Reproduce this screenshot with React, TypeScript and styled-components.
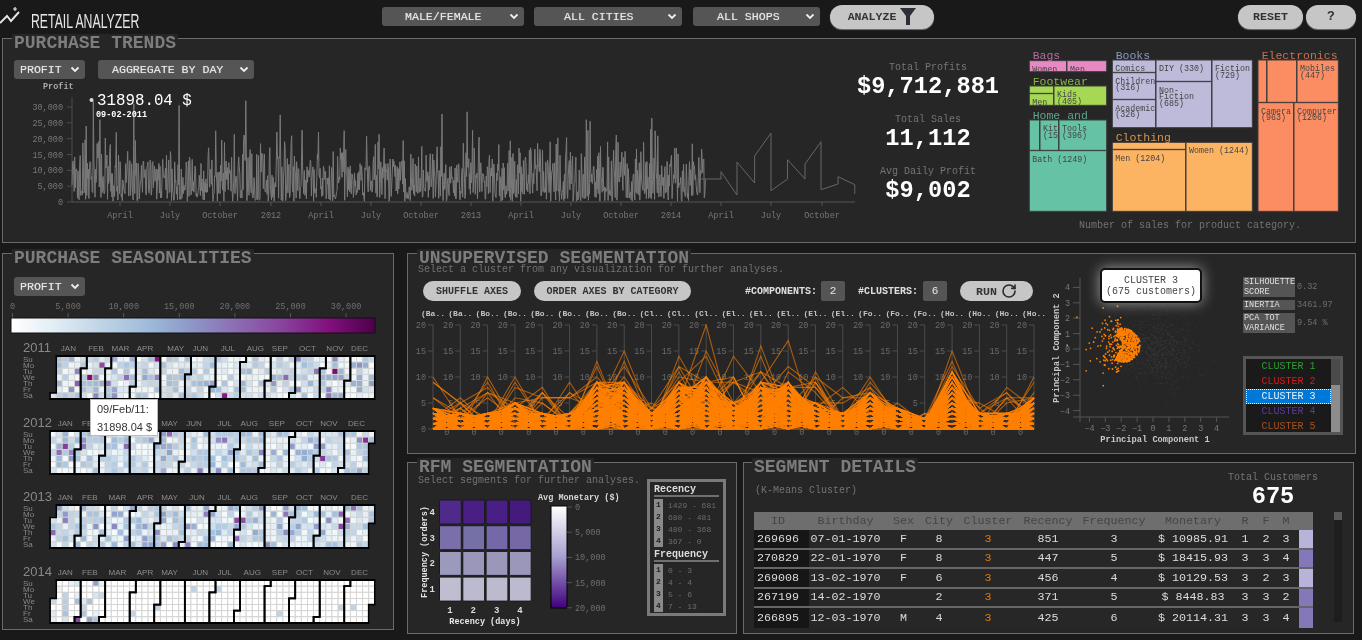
import React, { FC, ReactNode } from "react";
import styled, { createGlobalStyle } from "styled-components";
import { RotateCw } from "lucide-react";

const MONO = `"Liberation Mono", "Courier New", monospace`;
const SANS = `"Liberation Sans", Arial, sans-serif`;

const GlobalStyle = createGlobalStyle`
  html, body { margin: 0; padding: 0; background: #191919; }
  * { box-sizing: border-box; }
`;

// small seeded generator so the charts stay the same between runs
const makeRandom = (seed: number) => () => {
  seed = (seed * 1664525 + 1013904223) % 4294967296;
  return seed / 4294967296;
};
const gaussOf = (rnd: () => number) => () =>
  Math.sqrt(-2 * Math.log(rnd() + 1e-9)) * Math.cos(2 * Math.PI * rnd());

const DAY_PX = 0.5465;
const DAILY_COUNT = 1160;
const daily: number[] = (() => {
  const rnd = makeRandom(71);
  const gauss = gaussOf(rnd);
  const out: number[] = [];
  for (let i = 0; i < DAILY_COUNT; i++) {
    let v = rnd() < 0.26 ? 300 + rnd() * 3600 : 8800 + 4600 * gauss();
    if (rnd() < 0.035) v = 15000 + rnd() * 8000;
    out.push(Math.max(300, Math.min(v, 23000)));
  }
  const spikes: [number, number][] = [
    [86, 24000], [100, 26000], [116, 22000], [134, 31000], [179, 30500], [246, 32000],
    [280, 27500], [442, 27800], [467, 28500], [586, 26000], [590, 25500], [652, 26500],
  ];
  spikes.forEach(([x, v]) => {
    out[Math.round((x - 72) / DAY_PX)] = v;
  });
  out[39] = 31898;
  return out;
})();

const Page = styled.div`
  width: 1362px;
  height: 640px;
  overflow: hidden;
  background: #191919;
  font-family: ${MONO};
  padding: 0 6px 0 2px;
  filter: blur(0.35px);
`;

const Header = styled.header`
  height: 38px;
  margin-left: -2px;
  display: flex;
  align-items: center;
  padding-bottom: 5px;
`;

const Brand = styled.div`
  width: 382px;
  display: flex;
  align-items: center;
  padding-top: 9px;
`;

const BrandName = styled.span`
  font-family: ${SANS};
  font-size: 19.5px;
  color: #e6e6e6;
  white-space: nowrap;
  margin-left: 9px;
  display: inline-block;
  transform: scaleX(0.63);
  transform-origin: left center;
`;

const SelectBox = styled.div<{ $width: number; $pad: number; $gap?: number }>`
  width: ${(p) => p.$width}px;
  height: 19px;
  margin-right: ${(p) => p.$gap ?? 0}px;
  flex: none;
  background: #555;
  border-radius: 3px;
  color: #e6e6e6;
  font-size: 11.6px;
  text-shadow: 0 0 1px rgba(255, 255, 255, 0.55);
  display: flex;
  align-items: center;
  justify-content: space-between;
  padding: 0 5px 0 ${(p) => p.$pad}px;
`;

const Pill = styled.button<{ $width: number; $gap?: number; $size?: number }>`
  width: ${(p) => p.$width}px;
  height: 24px;
  margin-right: ${(p) => p.$gap ?? 0}px;
  flex: none;
  border: none;
  border-radius: 12px;
  background: #c6c6c6;
  box-shadow: 0 1px 1px #777;
  color: #333;
  font-family: ${MONO};
  font-size: ${(p) => p.$size ?? 11.6}px;
  font-weight: bold;
  display: flex;
  align-items: center;
  justify-content: center;
  gap: 4px;
  padding: 0;
`;

const HeaderEnd = styled.div`
  margin-left: auto;
  display: flex;
  gap: 3px;
`;

const Panel = styled.section<{ $height: number; $width?: number }>`
  position: relative;
  height: ${(p) => p.$height}px;
  width: ${(p) => (p.$width ? `${p.$width}px` : "auto")};
  background: #262626;
  border: 1px solid #6a6a6a;
  flex: none;
`;

const Title = styled.h2<{ $left?: number }>`
  width: fit-content;
  height: 18px;
  margin: -5px 0 0 ${(p) => p.$left ?? 9}px;
  padding: 0 2px;
  background: #262626;
  color: #7d7d7d;
  font-size: 18px;
  line-height: 18px;
  font-weight: bold;
  white-space: nowrap;
`;

const Sub = styled.div<{ $left?: number; $top?: number }>`
  margin: ${(p) => p.$top ?? 0}px 0 0 ${(p) => p.$left ?? 10}px;
  color: #737373;
  font-size: 10px;
  line-height: 10px;
  white-space: nowrap;
`;

const ChartSvg = styled.svg`
  display: block;
  overflow: visible;
`;

const AxisText = styled.text<{ $size?: number; $color?: string; $bold?: boolean; $sans?: boolean }>`
  font-family: ${(p) => (p.$sans ? SANS : MONO)};
  font-size: ${(p) => p.$size ?? 8.5}px;
  fill: ${(p) => p.$color ?? "#777"};
  font-weight: ${(p) => (p.$bold ? "bold" : "normal")};
`;

/* ---------- trends ---------- */

const TrendsBody = styled.div`
  display: flex;
`;

const TrendsLeft = styled.div`
  width: 857px;
  padding: 8px 0 0 11px;
`;

const SelectRow = styled.div`
  display: flex;
  margin-bottom: 4px;
`;

const KpiColumn = styled.div`
  width: 136px;
  padding-top: 10px;
  display: flex;
  flex-direction: column;
  gap: 14px;
  align-items: center;
`;

const Kpi = styled.div`
  display: flex;
  flex-direction: column;
  align-items: center;
  white-space: nowrap;
`;

const KpiLabel = styled.div`
  color: #757575;
  font-size: 10px;
  line-height: 12px;
`;

const KpiValue = styled.div`
  color: #fff;
  font-size: 23.7px;
  line-height: 26px;
  font-weight: bold;
`;

const TreemapColumn = styled.div`
  width: 335px;
  margin-left: 24px;
`;

const TreemapCaption = styled.div`
  color: #737373;
  font-size: 10px;
  line-height: 12px;
  text-align: center;
  padding-left: 5px;
  margin-top: 6px;
`;

const tickDates: [string, number][] = [
  ["April", 120], ["July", 170], ["October", 220], ["2012", 271], ["April", 321], ["July", 371],
  ["October", 421], ["2013", 471], ["April", 521], ["July", 571], ["October", 621], ["2014", 671],
  ["April", 721], ["July", 771], ["October", 822],
];

const sparseLine =
  "701,180 721,180 721,172.7 737,196 737,163 754.6,184 754.6,157 771,134 771,191.7 787.5,180 787.5,160.7 805,180 805,165 821,142.7 821,190.7 838,185 838,177.7 854.8,185.7 854.8,195";

const TrendChart: FC = () => {
  const y = (v: number) => 203 - (v / 30000) * 95;
  const line = daily.map((v, i) => `${(72 + i * DAY_PX).toFixed(1)},${y(v).toFixed(1)}`).join(" ");
  return (
    <ChartSvg width={846} height={140} viewBox="14 84 846 140">
      <AxisText x={43} y={90} $bold $color="#aaa">Profit</AxisText>
      <line x1={72} y1={98} x2={72} y2={203} stroke="#4d4d4d" />
      {[0, 5000, 10000, 15000, 20000, 25000, 30000].map((v) => (
        <g key={v}>
          <line x1={67} x2={72} y1={y(v)} y2={y(v)} stroke="#4d4d4d" />
          <AxisText x={63} y={y(v) + 3} textAnchor="end">{v.toLocaleString("en-US")}</AxisText>
        </g>
      ))}
      <line x1={72} y1={203} x2={855} y2={203} stroke="#555" />
      {tickDates.map(([t, x], i) => (
        <g key={i}>
          <line x1={x} x2={x} y1={203} y2={207} stroke="#555" />
          <AxisText x={x} y={219} textAnchor="middle">{t}</AxisText>
        </g>
      ))}
      <polyline points={line} fill="none" stroke="#7a7a7a" strokeWidth={1} />
      <polyline points={sparseLine} fill="none" stroke="#666" strokeWidth={1} />
      <circle cx={91.5} cy={101} r={2} fill="#ddd" />
      <AxisText x={97} y={106} $size={15.8} $color="#fff">31898.04 $</AxisText>
      <AxisText x={96} y={118} $size={8.5} $color="#fff" $bold>09-02-2011</AxisText>
    </ChartSvg>
  );
};

interface Cell {
  r: [number, number, number, number];
  lines?: string[];
}
interface Group {
  name: string;
  color: string;
  label: string;
  at: [number, number];
  cells: Cell[];
}

const treemap: Group[] = [
  { name: "Bags", color: "#e78ac3", label: "#b56e9e", at: [38, 58], cells: [
    { r: [28, 62, 140, 95], lines: ["Women"] },
    { r: [141, 62, 260, 95], lines: ["Men"] },
  ] },
  { name: "Footwear", color: "#a6d854", label: "#8cb24a", at: [38, 136], cells: [
    { r: [28, 138, 101, 160] },
    { r: [28, 161, 101, 196], lines: ["Men"] },
    { r: [102, 138, 260, 196], lines: ["Kids", "(405)"] },
  ] },
  { name: "Home and", color: "#66c2a5", label: "#5fa48f", at: [38, 238], cells: [
    { r: [28, 240, 59, 331] },
    { r: [60, 240, 116, 331], lines: ["Kit", "(153)"] },
    { r: [117, 240, 260, 331], lines: ["Tools", "(396)"] },
    { r: [28, 332, 260, 514], lines: ["Bath (1249)"] },
  ] },
  { name: "Books", color: "#bebada", label: "#8797bf", at: [287, 58], cells: [
    { r: [277, 60, 407, 97], lines: ["Comics"] },
    { r: [277, 98, 407, 178], lines: ["Children", "(316)"] },
    { r: [277, 179, 407, 263], lines: ["Academic", "(326)"] },
    { r: [408, 60, 575, 124], lines: ["DIY (330)"] },
    { r: [408, 125, 575, 263], lines: ["Non-", "Fiction", "(685)"] },
    { r: [576, 60, 697, 263], lines: ["Fiction", "(729)"] },
  ] },
  { name: "Clothing", color: "#fdb462", label: "#cf9555", at: [287, 304], cells: [
    { r: [277, 307, 497, 328] },
    { r: [277, 329, 497, 514], lines: ["Men (1204)"] },
    { r: [498, 307, 697, 514], lines: ["Women (1244)"] },
  ] },
  { name: "Electronics", color: "#fc8d62", label: "#c8704f", at: [725, 58], cells: [
    { r: [714, 60, 740, 187] },
    { r: [741, 60, 830, 187] },
    { r: [831, 60, 955, 187], lines: ["Mobiles", "(447)"] },
    { r: [714, 188, 821, 514], lines: ["Camera:", "(963)"] },
    { r: [822, 188, 955, 514], lines: ["Computer", "(1206)"] },
  ] },
];

const Treemap: FC = () => (
  <ChartSvg width={330} height={162} viewBox="0 36 990 486">
    {treemap.map((g) => (
      <g key={g.name}>
        {g.cells.map((c, i) => {
          const [x0, y0, x1, y1] = c.r;
          const id = `tm-${g.name.replace(" ", "")}-${i}`;
          return (
            <g key={id}>
              <clipPath id={id}>
                <rect x={x0} y={y0} width={x1 - x0} height={y1 - y0} />
              </clipPath>
              <rect x={x0} y={y0} width={x1 - x0} height={y1 - y0} fill={g.color} stroke="#3d3d3d" strokeWidth={3} />
              <g clipPath={`url(#${id})`}>
                {c.lines?.map((l, k) => (
                  <AxisText key={k} x={x0 + 9} y={y0 + 33 + k * 20} $size={25} $color="#444">{l}</AxisText>
                ))}
              </g>
            </g>
          );
        })}
        <AxisText x={g.at[0]} y={g.at[1]} $size={34.5} $color={g.label}>{g.name}</AxisText>
      </g>
    ))}
  </ChartSvg>
);

/* ---------- seasonalities ---------- */

const Stops = ["#f7fcfd", "#e0ecf4", "#bfd3e6", "#9ebcda", "#8c96c6", "#8c6bb1", "#88419d", "#810f7c", "#4d004b"];

const hex = (c: string) => [1, 3, 5].map((i) => parseInt(c.slice(i, i + 2), 16));
const colourOf = (t: number) => {
  const p = Math.min(Math.max(t, 0), 0.9999) * (Stops.length - 1);
  const i = Math.floor(p);
  const a = hex(Stops[i]);
  const b = hex(Stops[i + 1]);
  const m = a.map((v, k) => Math.round(v + (b[k] - v) * (p - i)));
  return `rgb(${m.join(",")})`;
};

const SeasonSelect = styled.div`
  margin: 10px 0 3px 11px;
`;

const YearStack = styled.div`
  margin-top: 4px;
  display: flex;
  flex-direction: column;
  gap: 14.7px;
`;

const DayTip = styled.div`
  position: absolute;
  left: 87px;
  top: 145px;
  width: 68px;
  height: 37px;
  background: #fff;
  border: 1px solid #bbb;
  color: #333;
  font-family: ${SANS};
  font-size: 11px;
  line-height: 18px;
  padding: 0 0 0 6px;
  white-space: nowrap;
`;

const Legend: FC = () => (
  <ChartSvg width={390} height={37} viewBox="3 299 390 37">
    <defs>
      <linearGradient id="profitScale">
        <stop offset="0" stopColor="#ffffff" />
        {Stops.slice(1).map((c, i) => (
          <stop key={c} offset={(i + 1) / (Stops.length - 1)} stopColor={c} />
        ))}
      </linearGradient>
    </defs>
    {[0, 5000, 10000, 15000, 20000, 25000, 30000].map((v, i) => (
      <g key={v}>
        <AxisText x={12.5 + i * 55.6} y={309} textAnchor="middle" $color="#6f6f6f">{v.toLocaleString("en-US")}</AxisText>
        <line x1={12.5 + i * 55.6} x2={12.5 + i * 55.6} y1={313} y2={318} stroke="#555" />
      </g>
    ))}
    <rect x={11} y={318} width={364} height={15} fill="url(#profitScale)" stroke="#111" />
  </ChartSvg>
);

const MONTHS = ["JAN", "FEB", "MAR", "APR", "MAY", "JUN", "JUL", "AUG", "SEP", "OCT", "NOV", "DEC"];
const DAYS = ["Su", "Mo", "Tu", "We", "Th", "Fr", "Sa"];
const CW = 6.13;
const CH = 6.14;
const DAY_MS = 86400000;

const YearCalendar: FC<{ year: number }> = ({ year }) => {
  const rnd = makeRandom(year * 7);
  const start = Date.UTC(year, 0, 1);
  const origin = Date.UTC(2011, 0, 1);
  const firstDow = new Date(start).getUTCDay();
  const total = (Date.UTC(year + 1, 0, 1) - start) / DAY_MS;
  const place = (doy: number) => {
    const d = (firstDow + doy) % 7;
    const w = Math.floor((firstDow + doy) / 7);
    return { d, w };
  };
  const cells: ReactNode[] = [];
  for (let i = 0; i < total; i++) {
    const { d, w } = place(i);
    const idx = (start - origin) / DAY_MS + i;
    let fill = "#fff";
    if (year < 2014) fill = colourOf(daily[idx % DAILY_COUNT] / 36000);
    else if (i < 59) fill = rnd() < 0.5 ? "#fff" : colourOf(daily[(idx * 3) % DAILY_COUNT] / 36000);
    else if (rnd() < 0.02) fill = "#bfd3e6";
    cells.push(
      <rect key={i} x={50 + w * CW} y={356 + d * CH} width={CW} height={CH} fill={fill} stroke="#d4d4d4" strokeWidth={0.9} />
    );
  }
  const months = MONTHS.map((m, i) => {
    const a = (Date.UTC(year, i, 1) - start) / DAY_MS;
    const b = (Date.UTC(year, i + 1, 1) - start) / DAY_MS - 1;
    const p0 = place(a);
    const p1 = place(b);
    const X = (w: number) => 50 + w * CW;
    const Y = (d: number) => 356 + d * CH;
    const path = `M${X(p0.w + 1)},${Y(p0.d)}H${X(p0.w)}V${Y(7)}H${X(p1.w)}V${Y(p1.d + 1)}H${X(p1.w + 1)}V${Y(0)}H${X(p0.w + 1)}Z`;
    return { m, path, cx: X((p0.w + p1.w + 1) / 2) };
  });
  return (
    <ChartSvg width={390} height={60} viewBox="3 340 390 60">
      <AxisText x={23} y={352} $sans $size={13} $color="#888">{year}</AxisText>
      {DAYS.map((d, i) => (
        <AxisText key={d} x={23} y={361.5 + i * 6.1} $sans $size={8} $color="#888">{d}</AxisText>
      ))}
      {months.map((m) => (
        <AxisText key={m.m} x={m.cx} y={351} textAnchor="middle" $sans $size={8} $color="#8c8c8c">{m.m}</AxisText>
      ))}
      {cells}
      {months.map((m) => (
        <path key={m.m} d={m.path} fill="none" stroke="#000" strokeWidth={1.8} />
      ))}
    </ChartSvg>
  );
};

/* ---------- unsupervised segmentation ---------- */

const UnsupBody = styled.div`
  display: flex;
`;

const UnsupLeft = styled.div`
  width: 632px;
  flex: none;
`;

const ControlRow = styled.div`
  height: 22px;
  margin-top: 5px;
  padding-left: 15px;
  display: flex;
  align-items: center;
`;

const Narrow = styled(Pill)`
  height: 20px;
  box-shadow: none;
`;

const ParamLabel = styled.span<{ $width: number; $left?: number }>`
  width: ${(p) => p.$width}px;
  margin-left: ${(p) => p.$left ?? 0}px;
  flex: none;
  color: #e0e0e0;
  font-size: 10px;
  font-weight: bold;
  white-space: nowrap;
`;

const ParamBox = styled.span`
  width: 24px;
  height: 20px;
  margin: 0 13px 0 5px;
  flex: none;
  background: #555;
  border-radius: 2px;
  color: #e6e6e6;
  font-size: 11px;
  display: flex;
  align-items: center;
  justify-content: center;
`;

const StatColumn = styled.div`
  width: 100px;
  margin: 10px 0 0 7px;
  flex: none;
`;

const StatRow = styled.div`
  display: flex;
  align-items: center;
  margin-bottom: 3px;
`;

const StatLabel = styled.div`
  width: 52px;
  flex: none;
  background: #555;
  color: #e0e0e0;
  font-size: 8.5px;
  line-height: 10px;
  padding: 0 0 0 1px;
`;

const StatValue = styled.div`
  margin-left: 2px;
  color: #6f6f6f;
  font-size: 8.5px;
  white-space: nowrap;
`;

const ListBox = styled.div`
  width: 100px;
  height: 79px;
  margin-top: 23px;
  border: 3px solid #555;
  background: #1a1a1a;
  display: flex;
`;

const ListItems = styled.div`
  flex: 1;
`;

const ListItem = styled.div<{ $color: string; $active?: boolean }>`
  height: 15px;
  line-height: 15px;
  text-align: center;
  font-size: 10px;
  color: ${(p) => p.$color};
  background: ${(p) => (p.$active ? "#0078d7" : "transparent")};
  outline: ${(p) => (p.$active ? "1px dotted #fff" : "none")};
  outline-offset: -1px;
`;

const ListScroll = styled.div`
  width: 9px;
  background: #8c8c8c;
`;

const ListThumb = styled.div`
  height: 26px;
  background: #4a4a4a;
`;

const ClusterTip = styled.div`
  position: absolute;
  left: 692px;
  top: 14px;
  width: 102px;
  height: 35px;
  background: #fff;
  border: 2px solid #111;
  border-radius: 5px;
  box-shadow: 0 0 14px rgba(255, 255, 255, 0.55);
  color: #444;
  font-size: 10px;
  line-height: 11px;
  padding-top: 5px;
  text-align: center;
`;

const axisPeaks = [10, 6, 10, 10, 8, 9, 13, 15, 5, 14, 20, 14, 16, 17, 11, 8, 10, 5, 3, 15, 5, 8, 10];
// how high the solid body of the lines reaches on each axis
const axisMass = [4, 3, 3, 5, 3, 3, 9, 9, 3, 9, 10, 5, 9, 9, 5, 3, 7, 4, 2, 11, 3, 3, 6];
const axisNames = [
  "Ba", "Ba", "Bo", "Bo", "Bo", "Bo", "Bo", "Bo", "Cl", "Cl", "Cl", "El", "El", "El", "El", "El",
  "Fo", "Fo", "Fo", "Ho", "Ho", "Ho", "Ho",
];

const parallelLines: string[] = (() => {
  const rnd = makeRandom(5);
  const ax = (i: number) => 433 + i * 27.32;
  const ay = (v: number) => 432 - v * 5.2;
  const out: string[] = [];
  for (let n = 0; n < 190; n++) {
    out.push(
      axisMass
        .map((mass, i) => {
          // most customers sit close to zero, only a few reach the peak of an axis
          let v = Math.round(mass * Math.pow(rnd(), 1.5));
          if (n === i) v = axisPeaks[i];
          if (n >= 23 && n < 40 && rnd() < 0.3) v = Math.round(axisPeaks[i] * (0.6 + rnd() * 0.3));
          return `${ax(i).toFixed(1)},${ay(v).toFixed(1)}`;
        })
        .join(" ")
    );
  }
  return out;
})();

const ParallelChart: FC = () => (
  <ChartSvg width={632} height={145} viewBox="408 305 632 145">
    {axisNames.map((n, i) => {
      const x = 433 + i * 27.32;
      return (
        <g key={i}>
          <AxisText x={x} y={319} textAnchor="middle" $bold $size={8} $color="#c4c4c4">({n}..</AxisText>
          <line x1={x} x2={x} y1={328} y2={432} stroke="#4c4c4c" />
          {[20, 15, 10, 5, 0].map((v) => (
            <g key={v}>
              <line x1={x - 5} x2={x} y1={432 - v * 5.2} y2={432 - v * 5.2} stroke="#4c4c4c" />
              <AxisText
                x={v === 0 && i > 0 ? x - 11 : x - 7}
                y={432 - v * 5.2 + (v === 0 && i > 0 ? 6 : 3)}
                textAnchor="end"
                $color="#6a6a6a"
              >
                {v}
              </AxisText>
            </g>
          ))}
        </g>
      );
    })}
    {parallelLines.map((p, i) => (
      <polyline key={i} points={p} fill="none" stroke="#ff8000" strokeWidth={1.1} strokeOpacity={i < 40 ? 0.6 : 0.85} />
    ))}
  </ChartSvg>
);

const scatter = (() => {
  const rnd = makeRandom(33);
  const gauss = gaussOf(rnd);
  const orange: [number, number][] = [];
  for (let i = 0; i < 675; i++) {
    if (i % 5 === 0) {
      orange.push([-2 - Math.abs(gauss()) * 0.95, 0.2 + gauss() * 0.95]);
    } else {
      const a = (rnd() - 0.5) * Math.PI * 1.3;
      const r = 1.12 * Math.sqrt(rnd());
      orange.push([-1.92 + r * Math.cos(a), 0.25 + r * Math.sin(a)]);
    }
  }
  const grey: [number, number][] = [];
  for (let i = 0; i < 900; i++) {
    grey.push([0.4 + gauss() * 1.1, gauss() * 1.2]);
  }
  return { orange, grey };
})();

const ScatterChart: FC = () => {
  const sx = (v: number) => 1153 + v * 15.9;
  const sy = (v: number) => 349 - v * 15.4;
  return (
    <ChartSvg width={196} height={180} viewBox="1040 267 196 180">
      <line x1={1080} x2={1080} y1={278} y2={422} stroke="#555" />
      <line x1={1073} x2={1229} y1={417} y2={417} stroke="#555" />
      {[-4, -3, -2, -1, 0, 1, 2, 3, 4].map((v) => (
        <g key={v}>
          <line x1={1073} x2={1080} y1={sy(v)} y2={sy(v)} stroke="#555" />
          <AxisText x={1070} y={sy(v) + 3} textAnchor="end" $size={8.5}>{String(v).replace("-", "−")}</AxisText>
          <line x1={sx(v)} x2={sx(v)} y1={417} y2={422} stroke="#555" />
          <AxisText x={sx(v)} y={431} textAnchor="middle" $size={8.5}>{String(v).replace("-", "−")}</AxisText>
        </g>
      ))}
      {scatter.grey.map(([x, y], i) => (
        <circle key={i} cx={sx(x)} cy={sy(y)} r={0.5} fill="#3a3a3a" />
      ))}
      {scatter.orange.map(([x, y], i) => (
        <circle key={i} cx={sx(x)} cy={sy(y)} r={0.9} fill="#ff8000" />
      ))}
      <AxisText x={1155} y={442} textAnchor="middle" $bold $color="#c8c8c8" $size={8.7}>Principal Component 1</AxisText>
      <AxisText transform="translate(1059 348) rotate(-90)" textAnchor="middle" $bold $color="#c8c8c8" $size={8.7}>
        Principal Component 2
      </AxisText>
    </ChartSvg>
  );
};

/* ---------- lower row ---------- */

const LowerRow = styled.div`
  display: flex;
  gap: 6px;
  margin-top: 8px;
`;

const RightStack = styled.div`
  flex: 1;
  min-width: 0;
`;

const MainRow = styled.div`
  display: flex;
  gap: 13px;
  margin-top: 10px;
`;

const RfmBody = styled.div`
  display: flex;
`;

const RfmLeft = styled.div`
  width: 239px;
  flex: none;
`;

const RfmBox = styled.div`
  width: 79px;
  height: 137px;
  margin-top: 3px;
  border: 3px solid #7a7a7a;
  padding: 2px 4px 0 4px;
`;

const RfmHeading = styled.div`
  height: 13px;
  line-height: 11px;
  border-bottom: 2px solid #707070;
  color: #dcdcdc;
  font-size: 10px;
  font-weight: bold;
`;

const RfmRows = styled.div`
  margin: 2px 0;
`;

const RfmRow = styled.div`
  height: 12px;
  display: flex;
  align-items: center;
  color: #6c6c6c;
  font-size: 8px;
  white-space: nowrap;
`;

const RfmKey = styled.span`
  width: 9px;
  height: 12px;
  margin-right: 5px;
  background: #8a8a8a;
  color: #222;
  font-weight: bold;
  line-height: 12px;
  text-align: center;
`;

const rfmColours = [
  ["#4f2a8a", "#4a1f85", "#4a1f85", "#451a7d"],
  ["#7a6eab", "#7570a5", "#7468a8", "#7568a5"],
  ["#9c9abc", "#9a97bb", "#9a97bb", "#9a97bb"],
  ["#bfbdd0", "#bcbace", "#bcbace", "#bcbace"],
];

const RfmChart: FC = () => (
  <ChartSvg width={239} height={145} viewBox="408 486 239 145">
    <defs>
      <linearGradient id="monetary" x1="0" y1="0" x2="0" y2="1">
        <stop offset="0" stopColor="#ffffff" />
        <stop offset="0.5" stopColor="#a79fce" />
        <stop offset="1" stopColor="#3f007d" />
      </linearGradient>
    </defs>
    {rfmColours.map((row, r) =>
      row.map((c, k) => (
        <rect key={`${r}-${k}`} x={439.5 + k * 23.3} y={500 + r * 25.7} width={21.8} height={24} rx={1} fill={c} stroke="#1a1a1a" />
      ))
    )}
    {[4, 3, 2, 1].map((n, i) => (
      <AxisText key={n} x={429.5} y={515 + i * 25.7} $size={9} $bold $color="#ddd">{n}</AxisText>
    ))}
    {[1, 2, 3, 4].map((n, i) => (
      <AxisText key={n} x={450 + i * 23.3} y={613} textAnchor="middle" $size={9} $bold $color="#ddd">{n}</AxisText>
    ))}
    <AxisText x={485} y={624} textAnchor="middle" $size={8.5} $bold $color="#e6e6e6">Recency (days)</AxisText>
    <AxisText transform="translate(427 552) rotate(-90)" textAnchor="middle" $size={8.5} $bold $color="#e6e6e6">
      Frequency (orders)
    </AxisText>
    <AxisText x={538} y={500} $size={8.5} $bold $color="#d8d8d8">Avg Monetary ($)</AxisText>
    <rect x={551} y={506} width={16} height={102} fill="url(#monetary)" stroke="#000" />
    {[0, 5000, 10000, 15000, 20000].map((v, i) => (
      <g key={v}>
        <line x1={567} x2={572} y1={507 + i * 25.2} y2={507 + i * 25.2} stroke="#555" />
        <AxisText x={575} y={510 + i * 25.2} $size={8.5} $color="#6f6f6f">{v.toLocaleString("en-US")}</AxisText>
      </g>
    ))}
  </ChartSvg>
);

const SegmentHead = styled.div`
  height: 36px;
  display: flex;
  justify-content: space-between;
`;

const TotalBox = styled.div`
  width: 100px;
  margin: -4px 30px 0 0;
  display: flex;
  flex-direction: column;
  align-items: center;
`;

const TableRow = styled.div`
  display: flex;
  margin-left: 10px;
`;

const Table = styled.table`
  width: 559px;
  table-layout: fixed;
  border-collapse: separate;
  border-spacing: 0;
  font-family: ${MONO};
  font-size: 11.7px;
`;

const Th = styled.th`
  height: 18px;
  padding: 0;
  background: #6e6e6e;
  color: #454545;
  font-weight: normal;

  &:first-child {
    padding-right: 7px;
  }
`;

const Td = styled.td<{ $color?: string; $dark?: boolean; $swatch?: string; $last?: boolean }>`
  height: 19.5px;
  padding: 0 ${(p) => (p.$dark ? 7 : 0)}px 0 0;
  text-align: center;
  color: ${(p) => p.$color ?? "#dcdcdc"};
  background: ${(p) => p.$swatch ?? (p.$dark ? "#161616" : "#272727")};
  border-bottom: ${(p) => (p.$last ? "none" : "2px solid #666")};
  white-space: nowrap;
`;

const TableScroll = styled.div`
  width: 8px;
  height: 110px;
  margin-left: 21px;
  background: #1e1e1e;
`;

const TableThumb = styled.div`
  height: 8px;
  background: #5a5a5a;
`;

const columnWidths = [55, 73, 43, 28, 70, 50, 82, 76, 28, 14, 26, 14];
const columnTitles = ["ID", "Birthday", "Sex", "City", "Cluster", "Recency", "Frequency", "Monetary", "R", "F", "M", ""];
const customers = [
  ["269696", "07-01-1970", "F", "8", "3", "851", "3", "$ 10985.91", "1", "2", "3", "#b8b3d8"],
  ["270829", "22-01-1970", "F", "8", "3", "447", "5", "$ 18415.93", "3", "3", "4", "#8478b8"],
  ["269008", "13-02-1970", "F", "6", "3", "456", "4", "$ 10129.53", "3", "2", "3", "#b8b3d8"],
  ["267199", "14-02-1970", "", "2", "3", "371", "5", "$ 8448.83", "3", "3", "2", "#8478b8"],
  ["266895", "12-03-1970", "M", "4", "3", "425", "6", "$ 20114.31", "3", "3", "4", "#8478b8"],
];

const rfmLegend = [
  { title: "Recency", rows: ["1429 - 681", "680 - 481", "480 - 368", "367 - 0"] },
  { title: "Frequency", rows: ["0 - 3", "4 - 4", "5 - 6", "7 - 13"] },
];

const clusters = [
  { name: "CLUSTER 1", color: "#2e9e2e" },
  { name: "CLUSTER 2", color: "#d41c1c" },
  { name: "CLUSTER 3", color: "#e8f2fb", active: true },
  { name: "CLUSTER 4", color: "#5c3a9a" },
  { name: "CLUSTER 5", color: "#a8501e" },
];

const Chevron: FC = () => (
  <svg width="10" height="7" viewBox="0 0 10 7" fill="none" stroke="#eee" strokeWidth="1.8">
    <path d="M1.5 1.5 L5 5 L8.5 1.5" />
  </svg>
);

const LogoMark = styled.svg`
  flex: none;
  margin-top: -10px;
`;

const Logo: FC = () => (
  <LogoMark width="22" height="20" viewBox="0 0 22 20" fill="none" stroke="#e8e8e8" strokeWidth="1.9">
    <path d="M0 17 L7 10 L11 15 L19 6" />
    <path d="M15 1 V5 M13 3 H17" strokeWidth="1.2" />
  </LogoMark>
);

const Funnel: FC = () => (
  <svg width="16" height="17" viewBox="0 0 16 17">
    <path d="M0 0 H16 L10 8 V17 H6 V8 Z" fill="#2c3036" />
  </svg>
);

const App: FC = () => (
  <Page>
    <GlobalStyle />
    <Header>
      <Brand>
        <Logo />
        <BrandName>RETAIL ANALYZER</BrandName>
      </Brand>
      <SelectBox $width={142} $pad={23} $gap={10}>MALE/FEMALE<Chevron /></SelectBox>
      <SelectBox $width={148} $pad={30} $gap={11}>ALL CITIES<Chevron /></SelectBox>
      <SelectBox $width={127} $pad={24} $gap={10}>ALL SHOPS<Chevron /></SelectBox>
      <Pill $width={104}>ANALYZE<Funnel /></Pill>
      <HeaderEnd>
        <Pill $width={65}>RESET</Pill>
        <Pill $width={50} $size={13}>?</Pill>
      </HeaderEnd>
    </Header>

    <Panel $height={205}>
      <Title>PURCHASE TRENDS</Title>
      <TrendsBody>
        <TrendsLeft>
          <SelectRow>
            <SelectBox $width={71} $pad={6} $gap={13}>PROFIT<Chevron /></SelectBox>
            <SelectBox $width={156} $pad={14}>AGGREGATE BY DAY<Chevron /></SelectBox>
          </SelectRow>
          <TrendChart />
        </TrendsLeft>
        <KpiColumn>
          <Kpi><KpiLabel>Total Profits</KpiLabel><KpiValue>$9,712,881</KpiValue></Kpi>
          <Kpi><KpiLabel>Total Sales</KpiLabel><KpiValue>11,112</KpiValue></Kpi>
          <Kpi><KpiLabel>Avg Daily Profit</KpiLabel><KpiValue>$9,002</KpiValue></Kpi>
        </KpiColumn>
        <TreemapColumn>
          <Treemap />
          <TreemapCaption>Number of sales for product category.</TreemapCaption>
        </TreemapColumn>
      </TrendsBody>
    </Panel>

    <MainRow>
      <Panel $height={377} $width={392}>
        <Title>PURCHASE SEASONALITIES</Title>
        <SeasonSelect>
          <SelectBox $width={71} $pad={6}>PROFIT<Chevron /></SelectBox>
        </SeasonSelect>
        <Legend />
        <YearStack>
          {[2011, 2012, 2013, 2014].map((y) => (
            <YearCalendar key={y} year={y} />
          ))}
        </YearStack>
        <DayTip>09/Feb/11:<br />31898.04 $</DayTip>
      </Panel>

      <RightStack>
        <Panel $height={201}>
          <Title>UNSUPERVISED SEGMENTATION</Title>
          <UnsupBody>
            <UnsupLeft>
              <Sub $top={-2}>Select a cluster from any visualization for further analyses.</Sub>
              <ControlRow>
                <Narrow $width={98} $gap={13} $size={10}>SHUFFLE AXES</Narrow>
                <Narrow $width={157} $size={10}>ORDER AXES BY CATEGORY</Narrow>
                <ParamLabel $width={71} $left={54}>#COMPONENTS:</ParamLabel>
                <ParamBox>2</ParamBox>
                <ParamLabel $width={60}>#CLUSTERS:</ParamLabel>
                <ParamBox>6</ParamBox>
                <Narrow $width={73}>RUN<RotateCw size={16} strokeWidth={2.4} color="#2a2a2a" /></Narrow>
              </ControlRow>
              <ParallelChart />
            </UnsupLeft>
            <ScatterChart />
            <StatColumn>
              <StatRow><StatLabel>SILHOUETTE SCORE</StatLabel><StatValue>0.32</StatValue></StatRow>
              <StatRow><StatLabel>INERTIA</StatLabel><StatValue>3461.97</StatValue></StatRow>
              <StatRow><StatLabel>PCA TOT VARIANCE</StatLabel><StatValue>9.54 %</StatValue></StatRow>
              <ListBox>
                <ListItems>
                  {clusters.map((c) => (
                    <ListItem key={c.name} $color={c.color} $active={c.active}>{c.name}</ListItem>
                  ))}
                </ListItems>
                <ListScroll><ListThumb /></ListScroll>
              </ListBox>
            </StatColumn>
          </UnsupBody>
          <ClusterTip>CLUSTER 3<br />(675 customers)</ClusterTip>
        </Panel>

        <LowerRow>
          <Panel $height={172} $width={330}>
            <Title>RFM SEGMENTATION</Title>
            <RfmBody>
              <RfmLeft>
                <Sub>Select segments for further analyses.</Sub>
                <RfmChart />
              </RfmLeft>
              <RfmBox>
                {rfmLegend.map((s) => (
                  <div key={s.title}>
                    <RfmHeading>{s.title}</RfmHeading>
                    <RfmRows>
                      {s.rows.map((r, i) => (
                        <RfmRow key={r}><RfmKey>{i + 1}</RfmKey>{r}</RfmRow>
                      ))}
                    </RfmRows>
                  </div>
                ))}
              </RfmBox>
            </RfmBody>
          </Panel>

          <Panel $height={172} $width={611}>
            <Title $left={8}>SEGMENT DETAILS</Title>
            <SegmentHead>
              <Sub $left={11} $top={10}>(K-Means Cluster)</Sub>
              <TotalBox>
                <KpiLabel>Total Customers</KpiLabel>
                <KpiValue>675</KpiValue>
              </TotalBox>
            </SegmentHead>
            <TableRow>
              <Table>
                <colgroup>
                  {columnWidths.map((w, i) => (
                    <col key={i} width={w} />
                  ))}
                </colgroup>
                <thead>
                  <tr>
                    {columnTitles.map((t, i) => (
                      <Th key={i}>{t}</Th>
                    ))}
                  </tr>
                </thead>
                <tbody>
                  {customers.map((row, r) => (
                    <tr key={row[0]}>
                      {row.map((v, i) => {
                        const last = r === customers.length - 1;
                        if (i === 11) return <Td key={i} $swatch={v} $last={last} />;
                        return (
                          <Td key={i} $dark={i === 0} $color={i === 4 ? "#e07a10" : undefined} $last={last}>
                            {v}
                          </Td>
                        );
                      })}
                    </tr>
                  ))}
                </tbody>
              </Table>
              <TableScroll><TableThumb /></TableScroll>
            </TableRow>
          </Panel>
        </LowerRow>
      </RightStack>
    </MainRow>
  </Page>
);

export default App;
